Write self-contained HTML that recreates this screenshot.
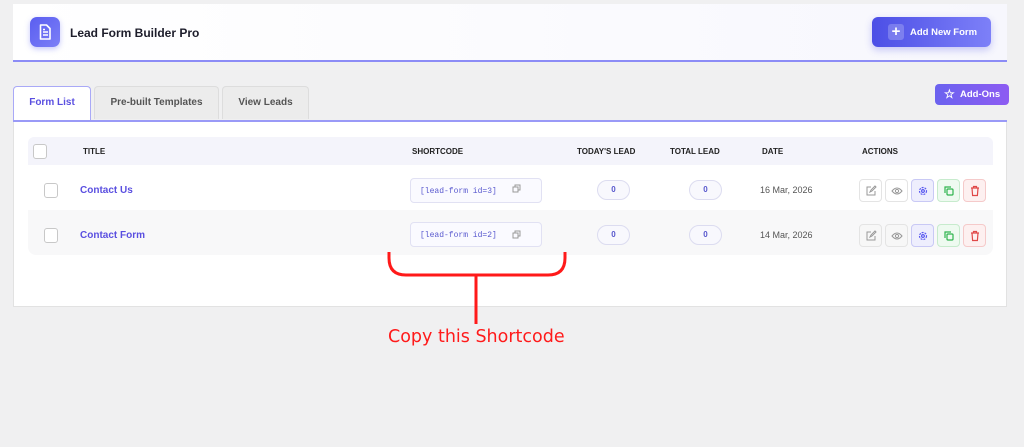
<!DOCTYPE html>
<html><head><style>
*{box-sizing:border-box;margin:0;padding:0}
body{width:1024px;height:447px;background:#f0f0f1;font-family:"Liberation Sans",sans-serif;position:relative;overflow:hidden}
.abs{position:absolute}
.hdr{left:13px;top:4px;width:994px;height:58px;background:linear-gradient(90deg,#fff,#f7f7fd);border-bottom:2px solid #8c8cf6}
.logo{left:17px;top:13px;width:30px;height:30px;border-radius:7px;background:linear-gradient(135deg,#5a5ef0,#7c7ff7);box-shadow:0 2px 6px rgba(90,94,240,.35)}
.title{left:57px;top:22px;font-size:12px;font-weight:bold;color:#1d1d2b}
.addbtn{left:859px;top:13px;width:119px;height:30px;border-radius:6px;background:linear-gradient(90deg,#4c4fe6,#7d80f8);color:#fff;font-size:9.5px;font-weight:bold;box-shadow:0 3px 8px rgba(80,84,230,.3)}
.tab{top:86px;height:33px;border:1px solid #ddd;border-bottom:none;border-radius:4px 4px 0 0;background:#ececec;color:#555;font-size:10px;font-weight:bold;text-align:center;line-height:31px}
.line{left:13px;top:120px;width:994px;height:2px;background:#9a9af7}
.panel{left:13px;top:122px;width:994px;height:185px;background:#fff;border:1px solid #e2e2e2;border-top:none}
.th{left:28px;top:137px;width:965px;height:28px;background:#f4f4fb;border-radius:6px 6px 0 0}
.thl{top:147px;font-size:8px;font-weight:bold;color:#222}
.row2{left:28px;top:210px;width:965px;height:45px;background:#f8f8f9;border-radius:0 0 8px 8px}
.cb{width:14px;height:15px;border:1.5px solid #c8c8c8;border-radius:3px;background:#fff}
.name{font-size:10px;color:#5a4fe0;font-weight:bold}
.sc{width:132px;height:25px;border:1px solid #e1e1f3;border-radius:4px;background:#fafaff;font-family:"Liberation Mono",monospace;font-size:8px;color:#5a5acf;padding:8px 0 0 9px}
.pill{width:33px;height:20px;border:1px solid #dcdcf0;border-radius:10px;background:#f8f8fd;color:#5555cc;font-size:8px;font-weight:bold;text-align:center;line-height:18px}
.date{font-size:9px;color:#555}
.ab{width:23px;height:23px;border-radius:4px;border:1px solid #e4e4e4;background:#fff;display:flex;align-items:center;justify-content:center}
</style></head><body>
<div class="abs hdr">
 <div class="abs logo"><svg width="30" height="30" viewBox="0 0 30 30"><path d="M10.5 8h6l3.5 3.5V22h-9.5z" fill="none" stroke="#fff" stroke-width="1.6" stroke-linejoin="round"/><path d="M13 15h5M13 18h5M13 12.5h2" stroke="#fff" stroke-width="1.4"/></svg></div>
 <div class="abs title">Lead Form Builder Pro</div>
 <div class="abs addbtn"><div class="abs" style="left:16px;top:7px;width:16px;height:16px;border-radius:3px;background:rgba(255,255,255,.22);color:#fff;font-size:15px;line-height:15px;text-align:center">+</div><div class="abs" style="left:38px;top:10px">Add New Form</div></div>
</div>
<div class="abs tab" style="left:13px;width:78px;background:#fff;border-color:#a9a9f7;color:#5a4fe0;height:35px">Form List</div>
<div class="abs tab" style="left:94px;width:125px">Pre-built Templates</div>
<div class="abs tab" style="left:222px;width:87px">View Leads</div>
<div class="abs" style="left:935px;top:84px;width:74px;height:21px;border-radius:4px;background:linear-gradient(90deg,#6b62ef,#8d5cf2);color:#fff;font-size:9.5px;font-weight:bold;line-height:21px;padding-left:25px"><span class="abs" style="left:9px;top:0;font-size:12px">☆</span>Add-Ons</div>
<div class="abs line"></div>
<div class="abs panel"></div>
<div class="abs th"></div>
<div class="abs cb" style="left:33px;top:144px"></div>
<div class="abs thl" style="left:83px">TITLE</div>
<div class="abs thl" style="left:412px">SHORTCODE</div>
<div class="abs thl" style="left:577px">TODAY'S LEAD</div>
<div class="abs thl" style="left:670px">TOTAL LEAD</div>
<div class="abs thl" style="left:762px">DATE</div>
<div class="abs thl" style="left:862px">ACTIONS</div>
<div class="abs row2"></div>

<div class="abs cb" style="left:44px;top:183px"></div>
<div class="abs name" style="left:80px;top:185px">Contact Us</div>
<div class="abs sc" style="left:410px;top:178px">[lead-form id=3]</div>
<div class="abs pill" style="left:597px;top:180px">0</div>
<div class="abs pill" style="left:689px;top:180px">0</div>
<div class="abs date" style="left:760px;top:185px">16 Mar, 2026</div>

<div class="abs cb" style="left:44px;top:228px"></div>
<div class="abs name" style="left:80px;top:230px">Contact Form</div>
<div class="abs sc" style="left:410px;top:222px">[lead-form id=2]</div>
<div class="abs pill" style="left:597px;top:225px">0</div>
<div class="abs pill" style="left:689px;top:225px">0</div>
<div class="abs date" style="left:760px;top:230px">14 Mar, 2026</div>

<svg class="abs" style="left:0;top:0" width="1024" height="447">
<g fill="none" stroke="#999" stroke-width="1">
<rect x="513" y="187" width="5" height="5"/><path d="M515 187v-2h5v5h-2"/>
<rect x="513" y="233" width="5" height="5"/><path d="M515 233v-2h5v5h-2"/>
</g>
<path d="M389 252v6q0 17 17 17h142q17 0 17-17v-6M476 275v49" fill="none" stroke="#ff1a1a" stroke-width="3"/>
</svg>
<div class="abs" style="left:388px;top:327px;font-family:'DejaVu Sans',sans-serif;font-size:17.5px;color:#ff1a1a">Copy this Shortcode</div>

<div class="abs" style="left:859px;top:179px;display:flex;gap:3px">
<div class="ab"><svg width="12" height="12" viewBox="0 0 12 12" fill="none" stroke="#999" stroke-width="1"><path d="M6 2H2v8h8V6"/><path d="M5 7l1-2 4-4 1 1-4 4z"/></svg></div>
<div class="ab"><svg width="12" height="12" viewBox="0 0 12 12" fill="none" stroke="#999" stroke-width="1"><path d="M1 6q5-6 10 0q-5 6-10 0z"/><circle cx="6" cy="6" r="1.6"/></svg></div>
<div class="ab" style="background:#eeeefd;border-color:#c9c9f5"><svg width="12" height="12" viewBox="0 0 12 12" fill="none" stroke="#5a5af0" stroke-width="1.2"><circle cx="6" cy="6" r="3.5" stroke-dasharray="2 1"/><circle cx="6" cy="6" r="1.4"/></svg></div>
<div class="ab" style="background:#eefaf0;border-color:#c7ebcd"><svg width="12" height="12" viewBox="0 0 12 12" fill="none" stroke="#2eb34d" stroke-width="1.2"><rect x="4" y="4" width="6" height="6" rx="1"/><path d="M2 8V2h6"/></svg></div>
<div class="ab" style="background:#fdf0f0;border-color:#f5caca"><svg width="12" height="12" viewBox="0 0 12 12" fill="none" stroke="#e04848" stroke-width="1.2"><path d="M2 3h8M4.5 3V1.5h3V3M3 3l.6 7.5h4.8L9 3"/></svg></div>
</div>
<div class="abs" style="left:859px;top:224px;display:flex;gap:3px">
<div class="ab" style="background:#f7f7f7"><svg width="12" height="12" viewBox="0 0 12 12" fill="none" stroke="#999" stroke-width="1"><path d="M6 2H2v8h8V6"/><path d="M5 7l1-2 4-4 1 1-4 4z"/></svg></div>
<div class="ab" style="background:#f7f7f7"><svg width="12" height="12" viewBox="0 0 12 12" fill="none" stroke="#999" stroke-width="1"><path d="M1 6q5-6 10 0q-5 6-10 0z"/><circle cx="6" cy="6" r="1.6"/></svg></div>
<div class="ab" style="background:#eeeefd;border-color:#c9c9f5"><svg width="12" height="12" viewBox="0 0 12 12" fill="none" stroke="#5a5af0" stroke-width="1.2"><circle cx="6" cy="6" r="3.5" stroke-dasharray="2 1"/><circle cx="6" cy="6" r="1.4"/></svg></div>
<div class="ab" style="background:#eefaf0;border-color:#c7ebcd"><svg width="12" height="12" viewBox="0 0 12 12" fill="none" stroke="#2eb34d" stroke-width="1.2"><rect x="4" y="4" width="6" height="6" rx="1"/><path d="M2 8V2h6"/></svg></div>
<div class="ab" style="background:#fdf0f0;border-color:#f5caca"><svg width="12" height="12" viewBox="0 0 12 12" fill="none" stroke="#e04848" stroke-width="1.2"><path d="M2 3h8M4.5 3V1.5h3V3M3 3l.6 7.5h4.8L9 3"/></svg></div>
</div>
</body></html>
